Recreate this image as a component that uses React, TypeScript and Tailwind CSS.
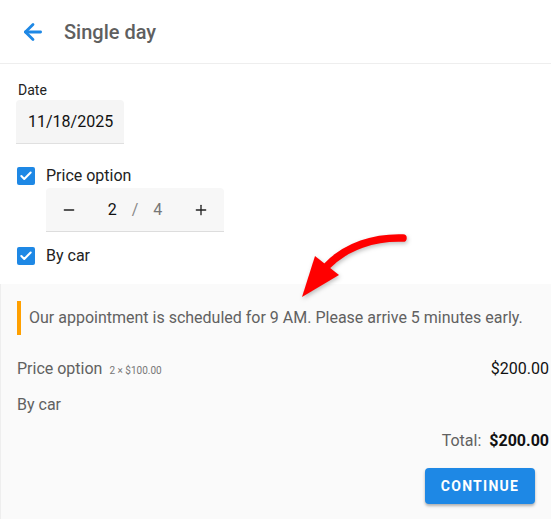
import { ArrowLeft, Check, Minus, Plus } from 'lucide-react';

function CheckBox() {
  return (
    <span className="flex h-[18px] w-[18px] items-center justify-center rounded-[2px] bg-[#1e88e5]">
      <Check className="h-[14px] w-[14px] text-white" strokeWidth={3.5} />
    </span>
  );
}

function PointerArrow() {
  return (
    <svg
      className="pointer-events-none absolute left-0 top-0"
      width={551}
      height={519}
      viewBox="0 0 551 519"
      style={{ filter: 'drop-shadow(1px 2px 2px rgba(0,0,0,0.25))' }}
    >
      <path
        d="M403 238 C 375 237, 346 246, 327 266"
        fill="none"
        stroke="#ff0000"
        strokeWidth={7.5}
        strokeLinecap="round"
      />
      <polygon points="302,297 315,256 339,275" fill="#ff0000" />
    </svg>
  );
}

export default function App() {
  return (
    <div
      className="relative h-[519px] w-[551px] overflow-hidden bg-white"
      style={{ fontFamily: 'Roboto, "Liberation Sans", sans-serif' }}
    >
      <header className="flex h-16 items-center border-b border-[#eeeeee] pl-5">
        <ArrowLeft className="h-[26px] w-[26px] text-[#1e88e5]" strokeWidth={2.6} />
        <h1 className="ml-[18px] text-[20px] font-medium text-[#5f5f5f]">Single day</h1>
      </header>

      <div className="px-4">
        <div className="mt-4">
          <label className="block pl-[2px] text-[14px] leading-5 text-[#222]">Date</label>
          <div className="flex h-[44px] w-[108px] items-center rounded-t border-b border-[#e0e0e0] bg-[#f5f5f5] pl-3 text-[16px] text-[#111]">
            11/18/2025
          </div>
        </div>

        <div className="mt-5 flex h-6 items-center pl-[1px]">
          <CheckBox />
          <span className="ml-[11px] text-[16px] text-[#222]">Price option</span>
        </div>

        <div className="ml-[30px] flex h-[44px] w-[178px] items-center rounded-t border-b border-[#dddddd] bg-[#f7f7f7] text-[16px]">
          <span className="flex w-[46px] justify-center text-[#222]">
            <Minus className="h-4 w-4" strokeWidth={2} />
          </span>
          <div className="flex flex-1 items-center justify-center gap-[15px]">
            <span className="text-[#111]">2</span>
            <span className="text-[#888]">/</span>
            <span className="text-[#777]">4</span>
          </div>
          <span className="flex w-[46px] justify-center text-[#222]">
            <Plus className="h-4 w-4" strokeWidth={2} />
          </span>
        </div>

        <div className="mt-3 flex h-6 items-center pl-[1px]">
          <CheckBox />
          <span className="ml-[11px] text-[16px] text-[#222]">By car</span>
        </div>
      </div>

      <section className="mt-4 h-full border-l border-[#eeeeee] bg-[#fafafa] pl-4 pr-[2px] pt-[17px]">
        <div className="flex h-[34px] items-center">
          <span className="h-full w-1 bg-[#ffa000]" />
          <p className="ml-2 text-[16px] text-[#616161]">
            Our appointment is scheduled for 9 AM. Please arrive 5 minutes early.
          </p>
        </div>

        <div className="mt-[22px] flex h-6 items-center justify-between text-[16px]">
          <div className="flex items-baseline">
            <span className="text-[#616161]">Price option</span>
            <span className="ml-[7px] text-[10px] text-[#777]">2 × $100.00</span>
          </div>
          <span className="text-[#111]">$200.00</span>
        </div>

        <div className="mt-3 flex h-6 items-center text-[16px] text-[#616161]">By car</div>

        <div className="mt-3 flex h-6 items-center justify-end text-[16px]">
          <span className="text-[#616161]">Total:</span>
          <span className="ml-2 font-bold text-[#111]">$200.00</span>
        </div>

        <div className="mr-[14px] mt-[15px] flex justify-end">
          <button className="h-9 w-[110px] rounded bg-[#1e88e5] text-[14px] font-bold uppercase tracking-[0.09em] text-white shadow-[0_2px_3px_rgba(0,0,0,0.3)]">
            Continue
          </button>
        </div>
      </section>

      <PointerArrow />
    </div>
  );
}
